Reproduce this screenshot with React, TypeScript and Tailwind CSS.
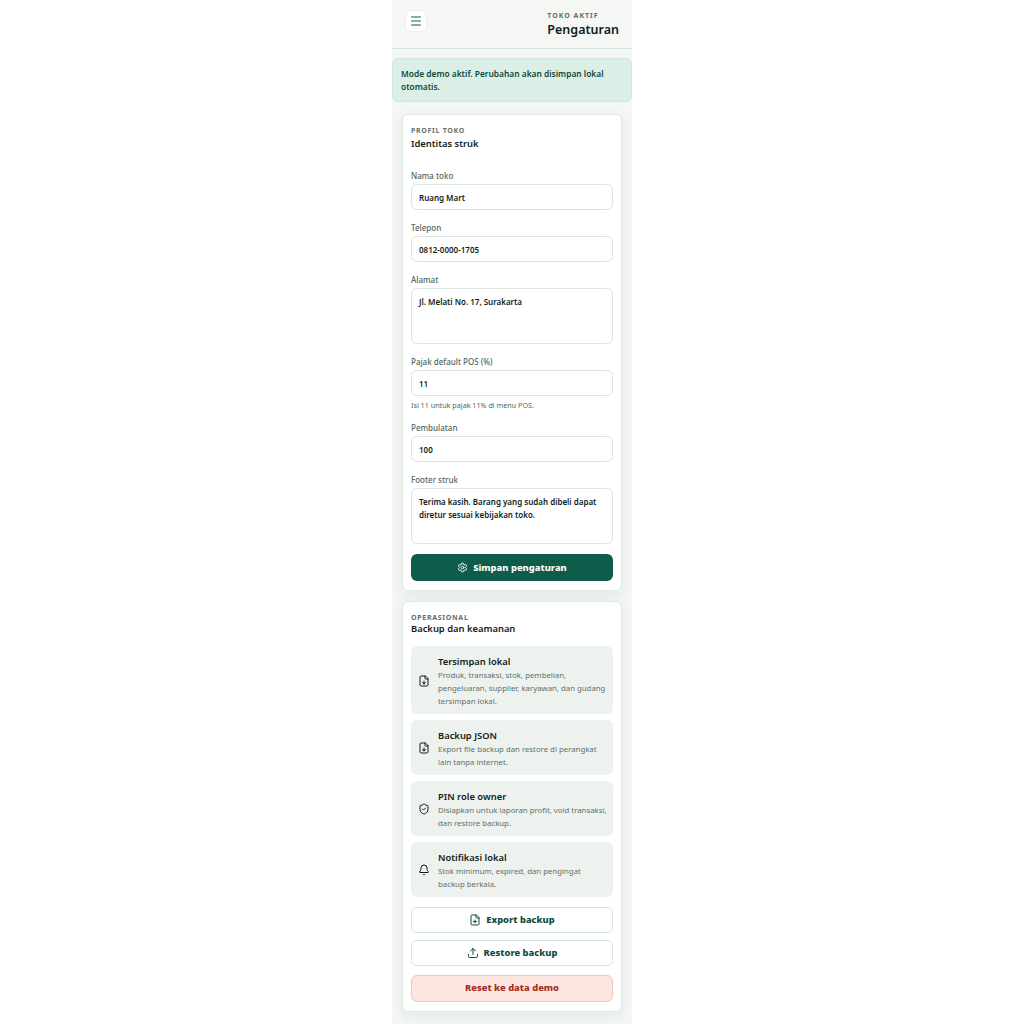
import { Bell, FileDown, FilePlus, Settings, ShieldCheck, Upload } from 'lucide-react';

const info = [
  { Icon: FileDown, title: 'Tersimpan lokal', text: 'Produk, transaksi, stok, pembelian, pengeluaran, supplier, karyawan, dan gudang tersimpan lokal.' },
  { Icon: FileDown, title: 'Backup JSON', text: 'Export file backup dan restore di perangkat lain tanpa internet.' },
  { Icon: ShieldCheck, title: 'PIN role owner', text: 'Disiapkan untuk laporan profit, void transaksi, dan restore backup.' },
  { Icon: Bell, title: 'Notifikasi lokal', text: 'Stok minimum, expired, dan pengingat backup berkala.' },
];

const Field = ({ label, children }: { label: string; children: React.ReactNode }) => (
  <div className="flex flex-col gap-[3px]">
    <label className="text-[8px] leading-[11px] font-medium text-[#53675f]">{label}</label>
    {children}
  </div>
);

const inputCls = 'h-[26px] w-full rounded-[6px] border border-[#dbe4df] bg-white px-[7px] text-[8px] font-semibold text-[#0f1c17] outline-none';
const areaCls = 'block h-[56px] w-full resize-none rounded-[6px] border border-[#dbe4df] bg-white px-[7px] py-[6px] text-[8px] leading-[13px] font-semibold text-[#0f1c17] outline-none';

export default function App() {
  return (
    <div className="mx-auto min-h-screen w-[240px] bg-[#f4f7f4] font-['Noto_Sans',sans-serif]">
      <header className="flex h-[49px] items-start justify-between border-b border-[#d9e3de] pl-[13px] pr-[13px] pt-[10px]">
        <button className="flex h-[22px] w-[22px] items-center justify-center rounded-[6px] border border-[#edf1ee] bg-white text-[#0e5c4a]">
          <svg width="12" height="12" viewBox="0 0 12 12" fill="none" stroke="currentColor" strokeWidth="1" strokeLinecap="round">
            <path d="M1.5 2h9M1.5 6h9M1.5 10h9" />
          </svg>
        </button>
        <div className="flex flex-col pt-[1px]">
          <span className="text-[7px] leading-[9px] font-bold tracking-[0.14em] text-[#5f7169]">TOKO AKTIF</span>
          <span className="mt-[1px] text-[12.5px] leading-[17px] font-semibold text-[#101c18]">Pengaturan</span>
        </div>
      </header>

      <div className="mt-[9px] rounded-[6px] border border-[#d3e5dd] bg-[#dcefe7] px-[8px] py-[8px] text-[8.4px] leading-[13px] font-semibold text-[#0c4a3b]">
        Mode demo aktif. Perubahan akan disimpan lokal otomatis.
      </div>

      <div className="mx-[10px] mt-[12px] rounded-[6px] border border-[#e0e8e3] bg-white p-[8px] pt-[11px] pb-[9px] shadow-[0_4px_14px_rgba(20,60,45,0.08)]">
        <div className="text-[7px] leading-[9px] font-bold tracking-[0.1em] text-[#5f7169]">PROFIL TOKO</div>
        <div className="mt-[2px] text-[9.4px] leading-[14px] font-semibold text-[#101c18]">Identitas struk</div>

        <div className="mt-[19px] flex flex-col gap-[12px]">
          <Field label="Nama toko">
            <input className={inputCls} defaultValue="Ruang Mart" />
          </Field>
          <Field label="Telepon">
            <input className={inputCls} defaultValue="0812-0000-1705" />
          </Field>
          <Field label="Alamat">
            <textarea className={areaCls} defaultValue="Jl. Melati No. 17, Surakarta" />
          </Field>
          <Field label="Pajak default POS (%)">
            <input className={inputCls} defaultValue="11" />
            <p className="mt-[1px] text-[7.2px] leading-[10px] text-[#53675f]">Isi 11 untuk pajak 11% di menu POS.</p>
          </Field>
          <Field label="Pembulatan">
            <input className={inputCls} defaultValue="100" />
          </Field>
          <Field label="Footer struk">
            <textarea className={areaCls} defaultValue="Terima kasih. Barang yang sudah dibeli dapat diretur sesuai kebijakan toko." />
          </Field>
          <button className="-mt-[2px] flex h-[27px] items-center justify-center gap-[5px] rounded-[6px] bg-[#0e5c4a] text-[9.4px] font-extrabold text-white">
            <Settings size={11} strokeWidth={2} />
            <span className="pt-[1px]">Simpan pengaturan</span>
          </button>
        </div>
      </div>

      <div className="mx-[10px] mt-[10px] rounded-[6px] border border-[#e0e8e3] bg-white p-[8px] pt-[11px] pb-[9px] shadow-[0_4px_14px_rgba(20,60,45,0.08)]">
        <div className="text-[7px] leading-[9px] font-bold tracking-[0.1em] text-[#5f7169]">OPERASIONAL</div>
        <div className="text-[9.4px] leading-[14px] font-semibold text-[#101c18]">Backup dan keamanan</div>

        <div className="mt-[10px] flex flex-col gap-[6.5px]">
          {info.map(({ Icon, title, text }) => (
            <div key={title} className="flex items-center gap-[8px] rounded-[6px] bg-[#edf2ee] pt-[8px] pb-[6px] pl-[7px] pr-[4px]">
              <Icon size={12} strokeWidth={2} className="shrink-0 text-[#101c18]" />
              <div>
                <div className="pt-[1px] text-[9.4px] leading-[13.5px] font-semibold text-[#101c18]">{title}</div>
                <div className="text-[7.8px] leading-[13px] text-[#5f7169]">{text}</div>
              </div>
            </div>
          ))}
        </div>

        <div className="mt-[10px] flex flex-col gap-[7px]">
          <button className="flex h-[26px] items-center justify-center gap-[5px] rounded-[6px] border border-[#d9e3de] bg-white text-[9.4px] font-extrabold text-[#0c4a3b]">
            <FilePlus size={12} strokeWidth={2} />
            <span className="pt-[1px]">Export backup</span>
          </button>
          <button className="flex h-[26px] items-center justify-center gap-[5px] rounded-[6px] border border-[#d9e3de] bg-white text-[9.4px] font-extrabold text-[#0c4a3b]">
            <Upload size={12} strokeWidth={2} />
            <span className="pt-[1px]">Restore backup</span>
          </button>
          <button className="mt-[2px] h-[27px] rounded-[6px] border border-[#f3c4bc] bg-[#fde6e2] pt-[1px] text-[9.4px] font-extrabold text-[#a02c20]">
            Reset ke data demo
          </button>
        </div>
      </div>
      <div className="h-[13px]" />
    </div>
  );
}
